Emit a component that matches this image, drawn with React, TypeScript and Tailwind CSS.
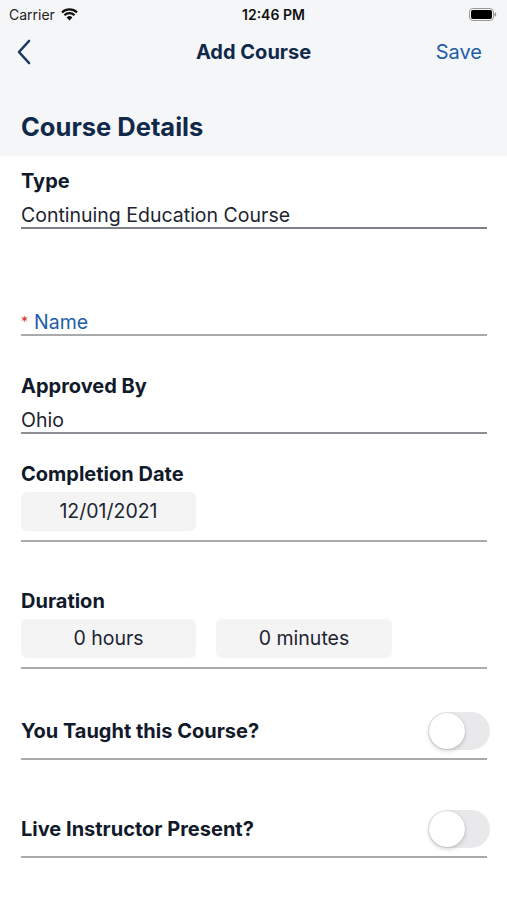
import React from "react";

const font = { fontFamily: "Inter, 'Noto Sans', 'Liberation Sans', sans-serif" };

function Rule() {
  return <div className="h-[2px] bg-[#a9abae]" />;
}

function Toggle() {
  return (
    <div className="relative h-[38px] w-[62px] rounded-full bg-[#e9e9eb]">
      <div className="absolute left-[1px] top-[1px] h-[36px] w-[36px] rounded-full bg-white shadow-[0_2px_4px_rgba(0,0,0,0.18),0_0_1px_rgba(0,0,0,0.2)]" />
    </div>
  );
}

function Pill({ children, w = "w-[175px]" }: { children: React.ReactNode; w?: string }) {
  return (
    <div className={`flex h-[39px] ${w} items-center justify-center rounded-md bg-[#f4f4f5] text-[19.5px] text-[#1d2430]`}>
      {children}
    </div>
  );
}

export default function App() {
  return (
    <div className="min-h-[900px] w-[507px] bg-white" style={font}>
      <div className="bg-[#f5f6f7]">
        <div className="flex h-[28px] items-center justify-between pl-[9px] pr-[10px]">
          <div className="flex items-center gap-[6px] text-[14px] text-[#222]">
            Carrier
            <svg width="17" height="13" viewBox="0 0 17 13">
              <path d="M8.5 12.5 L5.6 9.4 A4.2 4.2 0 0 1 11.4 9.4 Z" fill="#111" />
              <path d="M3.4 7.2 A7.3 7.3 0 0 1 13.6 7.2" stroke="#111" strokeWidth="2.1" fill="none" />
              <path d="M1 4.4 A10.8 10.8 0 0 1 16 4.4" stroke="#111" strokeWidth="2.1" fill="none" />
            </svg>
          </div>
          <div className="text-[14px] font-semibold text-[#111]">12:46 PM</div>
          <svg width="28" height="13" viewBox="0 0 28 13">
            <rect x="0.5" y="0.5" width="24" height="12" rx="3.5" fill="none" stroke="#999" />
            <rect x="2" y="2" width="21" height="9" rx="2" fill="#000" />
            <rect x="25.5" y="4.5" width="1.6" height="4" rx="0.8" fill="#999" />
          </svg>
        </div>
        <div className="relative flex h-[48px] items-center justify-center">
          <svg className="absolute left-[16px]" width="16" height="26" viewBox="0 0 16 26">
            <path d="M13 2 L3 13 L13 24" stroke="#163a5f" strokeWidth="2.6" fill="none" strokeLinecap="round" strokeLinejoin="round" />
          </svg>
          <div className="text-[20px] font-bold text-[#10294a]">Add Course</div>
          <div className="absolute right-[25px] text-[20px] text-[#1e5da6]">Save</div>
        </div>
        <div className="px-[21px] pb-[14px] pt-[36px] text-[25.5px] font-bold leading-[30px] text-[#10294a]">
          Course Details
        </div>
      </div>

      <div className="pl-[21px] pr-[20px] text-[#111a2b]">
        <div className="pt-[13px] text-[20px] font-bold leading-[24px]">Type</div>
        <div className="mt-[10px] text-[19.5px] leading-[24px] text-[#1d2430]">Continuing Education Course</div>
        <div className="h-[2px] bg-[#7d8187]" />

        <div className="mt-[81px] flex text-[19.5px] leading-[24px] text-[#1e5da6]">
          <span className="mr-[6px] text-[14px] text-[#d62b2b]">*</span>Name
        </div>
        <div><Rule /></div>

        <div className="mt-[38px] text-[20px] font-bold leading-[24px]">Approved By</div>
        <div className="mt-[10px] text-[19.5px] leading-[24px] text-[#1d2430]">Ohio</div>
        <div className="h-[2px] bg-[#8c9095]" />

        <div className="mt-[28px] text-[20px] font-bold leading-[24px]">Completion Date</div>
        <div className="mt-[6px]"><Pill>12/01/2021</Pill></div>
        <div className="mt-[9px]"><Rule /></div>

        <div className="mt-[47px] text-[20px] font-bold leading-[24px]">Duration</div>
        <div className="mt-[6px] flex gap-[20px]">
          <Pill>0 hours</Pill>
          <Pill w="w-[176px]">0 minutes</Pill>
        </div>
        <div className="mt-[9px]"><Rule /></div>

        <div className="mt-[43px] flex items-center justify-between">
          <div className="text-[20px] font-bold">You Taught this Course?</div>
          <div className="-mr-[3px]"><Toggle /></div>
        </div>
        <div className="mt-[8px]"><Rule /></div>

        <div className="mt-[50px] flex items-center justify-between">
          <div className="text-[20px] font-bold">Live Instructor Present?</div>
          <div className="-mr-[3px]"><Toggle /></div>
        </div>
        <div className="mt-[8px]"><Rule /></div>
      </div>
    </div>
  );
}
